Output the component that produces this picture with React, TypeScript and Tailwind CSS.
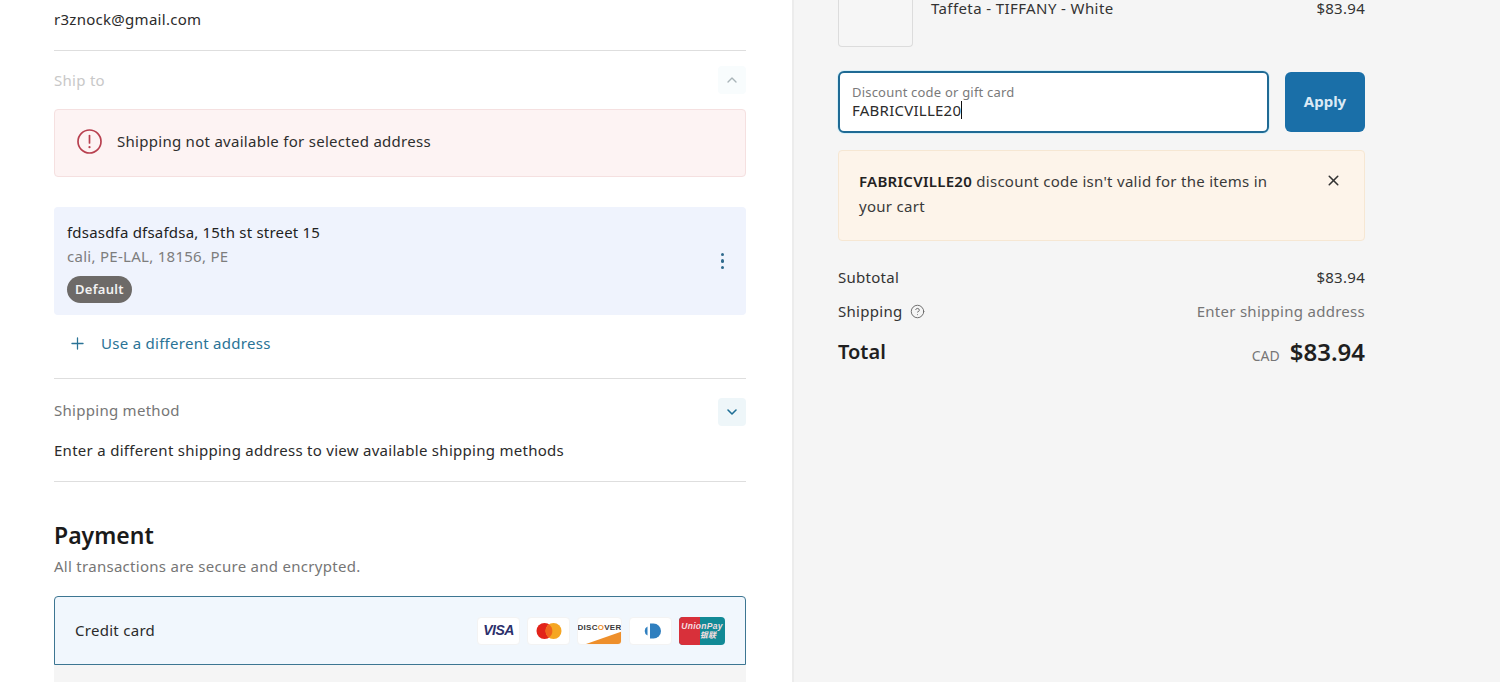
import React from 'react';
import { ChevronUp, ChevronDown, Plus, X, CircleHelp } from 'lucide-react';

const VisaCard = () => (
    <div className="w-[43px] h-[28px] bg-white rounded-sm border border-[#f3f3f3] flex items-center justify-center">
        <span className="text-[14px] font-extrabold italic text-[#2b2f6b] tracking-[-0.5px] font-['Liberation_Sans',sans-serif]">VISA</span>
    </div>
);

const MasterCard = () => (
    <div className="w-[43px] h-[28px] bg-white rounded-sm border border-[#f3f3f3] flex items-center justify-center">
        <svg width="28" height="18" viewBox="0 0 28 18">
            <circle cx="9.5" cy="9" r="8" fill="#e2231a" />
            <circle cx="18.5" cy="9" r="8" fill="#f5a623" />
            <path d="M14 2.5a8 8 0 0 1 0 13 8 8 0 0 1 0-13z" fill="#f0641e" />
        </svg>
    </div>
);

const DiscoverCard = () => (
    <div className="relative w-[45px] h-[28px] bg-white rounded-sm border border-[#f3f3f3] overflow-hidden flex justify-center">
        <span className="mt-[5px] text-[8px] leading-[10px] font-bold text-[#3a3a3a] font-['Liberation_Sans',sans-serif]">
            DISC<span className="text-[#ee8f2b]">O</span>VER
        </span>
        <svg className="absolute left-0 bottom-0" width="45" height="14" viewBox="0 0 45 14">
            <path d="M8 14 L45 1 V14 Z" fill="#ee8f2b" />
        </svg>
    </div>
);

const DinersCard = () => (
    <div className="w-[43px] h-[28px] bg-white rounded-sm border border-[#f3f3f3] flex items-center justify-center">
        <svg width="26" height="18" viewBox="0 0 26 18">
            <path d="M12 1.5h3.5a7.5 7.5 0 0 1 0 15H12z" fill="#2f7fbf" />
            <path d="M9.5 4.5a5 5 0 0 0 0 9z" fill="#2f7fbf" />
        </svg>
    </div>
);

const UnionPayCard = () => (
    <div className="relative w-[46px] h-[28px] rounded-sm overflow-hidden flex bg-[#128a96]">
        <div className="w-[21px] bg-[#d8303a]" />
        <div className="absolute inset-0 flex flex-col items-center justify-center text-[#f4dfe0] italic font-bold font-['Liberation_Sans','Noto_Sans_CJK_SC',sans-serif]">
            <span className="text-[8.5px] leading-[10px]">UnionPay</span>
            <span className="text-[8px] leading-[9px] pl-3">银联</span>
        </div>
    </div>
);

const Divider = () => <div className="h-px bg-[#dedede]" />;

const App = () => {
    return (
        <div className="flex w-[1500px] h-[682px] overflow-hidden bg-[#f5f5f5] text-[#1f1f1f] text-[15px] tracking-[0.28px] font-['Noto_Sans',sans-serif]">
            {/* Checkout form */}
            <div className="w-[794px] shrink-0 h-full bg-white border-r-2 border-[#ececec] pl-[54px] pr-[46px]">
                <div className="h-[50px] pt-[8px] leading-[22px] text-[#2b2b2b]">r3znock@gmail.com</div>
                <Divider />

                <div className="flex items-center justify-between h-[58px]">
                    <span className="text-[#c8c8c8]">Ship to</span>
                    <div className="w-[28px] h-[28px] rounded bg-[#f8fcfd] flex items-center justify-center">
                        <ChevronUp className="w-4 h-4 text-[#a9b4b8]" strokeWidth={2} />
                    </div>
                </div>

                <div className="h-[68px] pb-[3px] flex items-center gap-[14px] pl-[21px] rounded bg-[#fdf3f3] border border-[#f5e0e0]">
                    <svg width="27" height="27" viewBox="0 0 27 27" fill="none" stroke="#b8404f" strokeWidth="1.7" strokeLinecap="round">
                        <circle cx="13.5" cy="13.5" r="11.5" />
                        <path d="M13.5 7.5v7.5" />
                        <path d="M13.5 19v.2" strokeWidth="2.2" />
                    </svg>
                    <span className="text-[#2e2e2e]">Shipping not available for selected address</span>
                </div>

                <div className="mt-[30px] h-[108px] rounded bg-[#eff3fd] flex items-center justify-between pl-[13px] pr-[22px]">
                    <div className="flex flex-col items-start self-start pt-[13px]">
                        <span className="leading-[24px] tracking-[0.2px] text-[#222]">fdsasdfa dfsafdsa, 15th st street 15</span>
                        <span className="leading-[24px] text-[#7d7d7d]">cali, PE-LAL, 18156, PE</span>
                        <span className="mt-[8px] h-[27px] px-[8px] rounded-full bg-[#6d6a68] text-[#f2f2f2] text-[13px] font-semibold flex items-center">Default</span>
                    </div>
                    <div className="flex flex-col gap-[3px]">
                        <span className="w-[3.5px] h-[3.5px] rounded-full bg-[#2f6a8d]" />
                        <span className="w-[3.5px] h-[3.5px] rounded-full bg-[#2f6a8d]" />
                        <span className="w-[3.5px] h-[3.5px] rounded-full bg-[#2f6a8d]" />
                    </div>
                </div>

                <div className="h-[63px] pb-[7px] flex items-center gap-[14px] pl-[14px] text-[#2a7396]">
                    <Plus className="w-[19px] h-[19px]" strokeWidth={1.6} />
                    <span>Use a different address</span>
                </div>
                <Divider />

                <div className="flex items-center justify-between h-[65px]">
                    <span className="text-[#767676] pb-[2px]">Shipping method</span>
                    <div className="w-[28px] h-[28px] rounded bg-[#eef6f9] flex items-center justify-center">
                        <ChevronDown className="w-4 h-4 text-[#1f6f96]" strokeWidth={2.4} />
                    </div>
                </div>
                <div className="h-[37px] -mt-[5px] mb-[5px] leading-[22px] text-[#2b2b2b]">Enter a different shipping address to view available shipping methods</div>
                <Divider />

                <h2 className="mt-[36px] text-[23px] tracking-normal leading-[34px] font-semibold text-[#1a1a1a]">Payment</h2>
                <p className="leading-[24px] mt-[2px] text-[#767676]">All transactions are secure and encrypted.</p>

                <div className="mt-[18px] h-[69px] rounded-t bg-[#f1f7fd] border border-[#3d7692] flex items-center justify-between pl-[20px] pr-[20px]">
                    <span className="text-[#2b2b2b]">Credit card</span>
                    <div className="flex items-center gap-[7px]">
                        <VisaCard />
                        <MasterCard />
                        <DiscoverCard />
                        <DinersCard />
                        <UnionPayCard />
                    </div>
                </div>
                <div className="h-[20px] bg-[#f5f5f5]" />
            </div>

            {/* Order summary */}
            <div className="w-[527px] ml-[44px] shrink-0">
                <div className="flex items-start justify-between h-[71px]">
                    <div className="flex items-start gap-[18px]">
                        <div className="w-[75px] h-[47px] rounded-b border border-t-0 border-[#dcdcdc] bg-[#f6f6f6]" />
                        <span className="leading-[16px] tracking-[0.4px] text-[#333]">Taffeta - TIFFANY - White</span>
                    </div>
                    <span className="leading-[16px] text-[#333]">$83.94</span>
                </div>

                <div className="flex justify-between">
                    <div className="w-[431px] h-[62px] rounded-md bg-white border-2 border-[#1f6a94] shadow-[0_0_0_1px_#d8f0f8] pl-[12px] pt-[11px]">
                        <div className="text-[13px] leading-[17px] tracking-[0.2px] text-[#7a7a7a]">Discount code or gift card</div>
                        <div className="leading-[18px] tracking-[0.25px] text-[#2b2b2b] flex items-center">
                            FABRICVILLE20<span className="w-px h-[18px] bg-[#111]" />
                        </div>
                    </div>
                    <div className="w-[80px] h-[60px] mt-px pb-[2px] rounded-md bg-[#1a6fa8] text-[#dceaf5] font-bold tracking-normal flex items-center justify-center">Apply</div>
                </div>

                <div className="mt-[17px] h-[91px] rounded bg-[#fdf4ea] border border-[#f6e7d3] flex items-start justify-between pl-[20px] pr-[22px] pt-[18px]">
                    <p className="w-[415px] leading-[25px] tracking-[0.28px] text-[#3a3a3a]">
                        <span className="font-semibold text-[#222]">FABRICVILLE20</span> discount code isn't valid for the items in your cart
                    </p>
                    <X className="w-[17px] h-[17px] mt-[3px] text-[#333]" strokeWidth={2.2} />
                </div>

                <div className="mt-[25px] flex items-center justify-between h-[22px] text-[#333]">
                    <span>Subtotal</span>
                    <span>$83.94</span>
                </div>
                <div className="mt-[12px] flex items-center justify-between h-[22px]">
                    <span className="flex items-center gap-[8px] text-[#333]">
                        Shipping <CircleHelp className="w-[15px] h-[15px] text-[#666]" strokeWidth={1.5} />
                    </span>
                    <span className="text-[#767676]">Enter shipping address</span>
                </div>
                <div className="mt-[15px] flex items-center justify-between h-[30px]">
                    <span className="text-[20px] tracking-normal font-semibold text-[#1f1f1f]">Total</span>
                    <span className="flex items-baseline gap-[10px]">
                        <span className="text-[14px] tracking-normal text-[#767676]">CAD</span>
                        <span className="text-[24px] tracking-normal font-semibold text-[#1f1f1f]">$83.94</span>
                    </span>
                </div>
            </div>
        </div>
    );
};

export default App;
